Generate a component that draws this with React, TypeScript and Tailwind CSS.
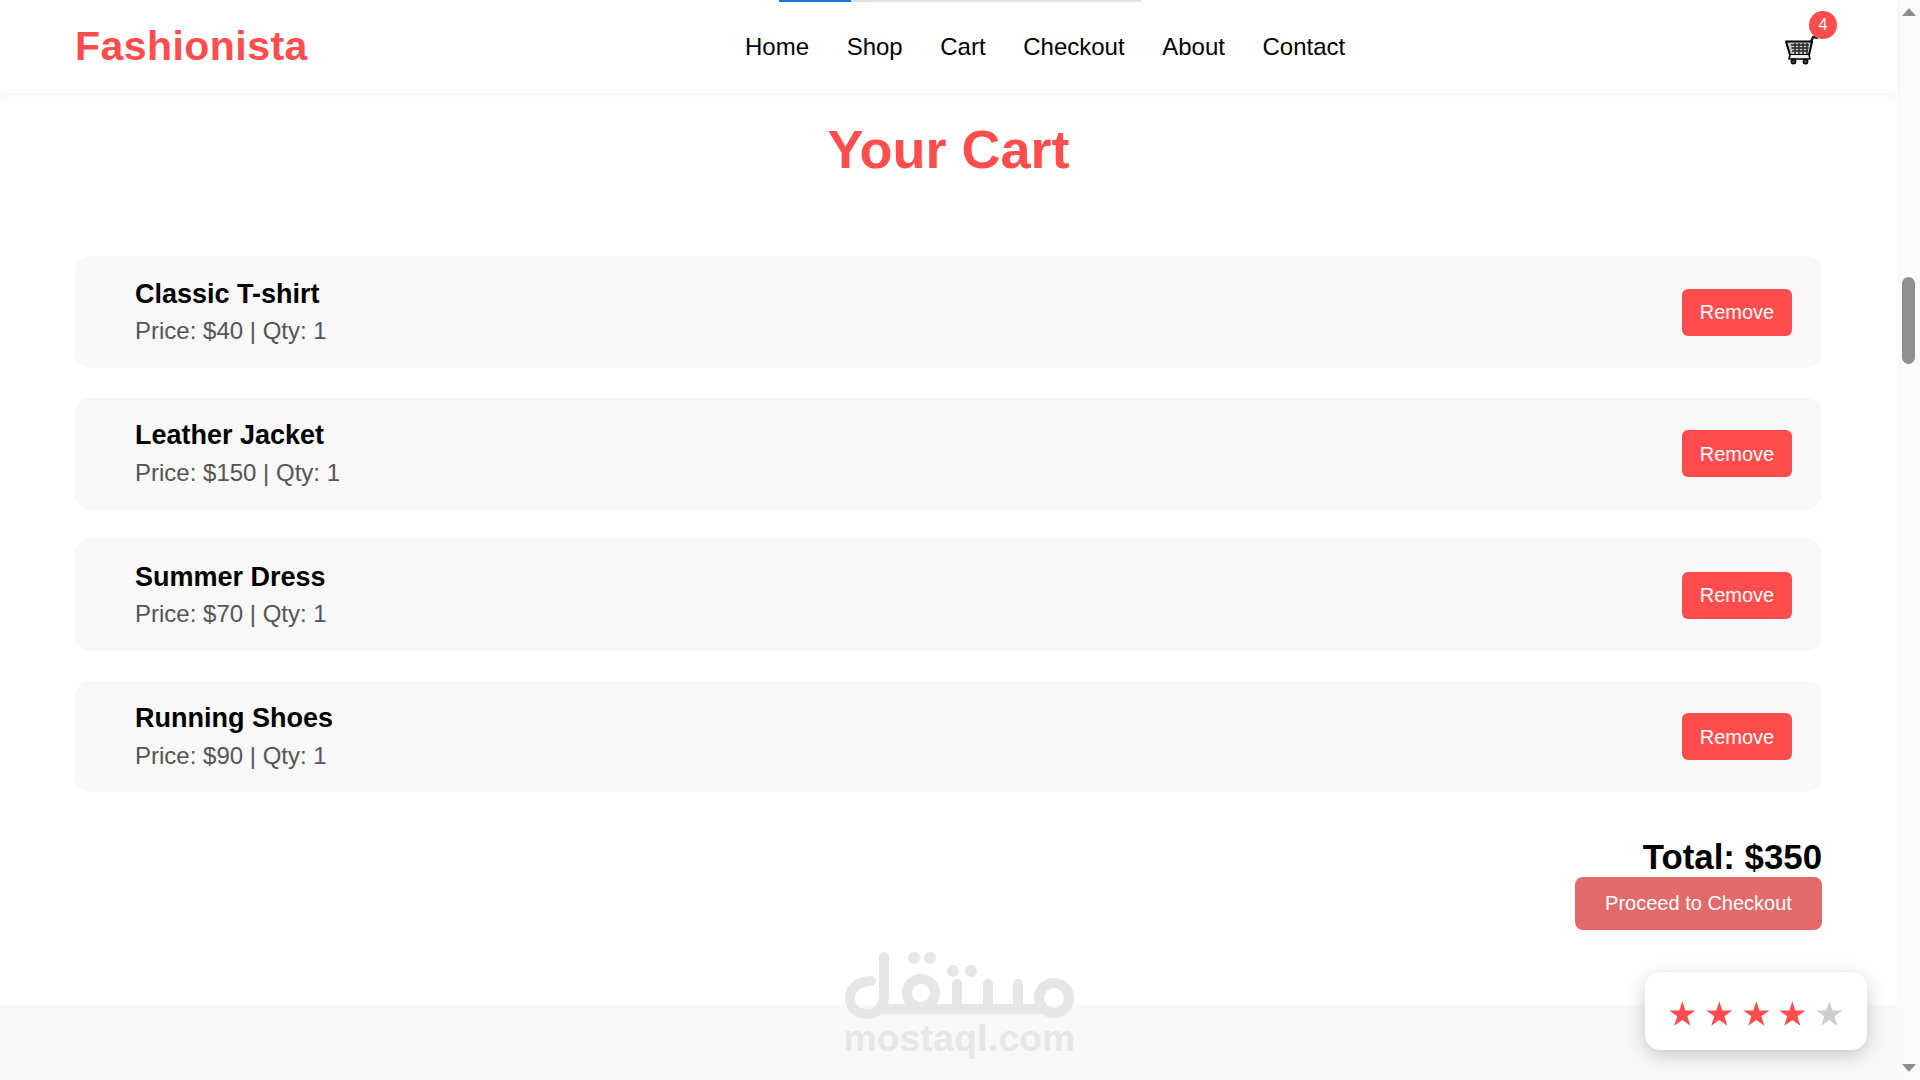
const items = [
  { name: "Classic T-shirt", price: 40 },
  { name: "Leather Jacket", price: 150 },
  { name: "Summer Dress", price: 70 },
  { name: "Running Shoes", price: 90 },
];
const navs = ["Home", "Shop", "Cart", "Checkout", "About", "Contact"];

function CartIcon() {
  return (
    <svg width="34" height="30" viewBox="0 0 34 30" fill="none" className="block">
      <path d="M26 7 L28 2 L33 3" stroke="#222" strokeWidth="2.4" strokeLinejoin="round" />
      <path d="M1 6.5 H27 L24 20 H5 Z" fill="#c4c4c4" stroke="#000" strokeWidth="2" strokeLinejoin="round" />
      <path d="M6 10 H24 M6.5 13 H23.5 M7 16 H23 M10 8 V19 M14 8 V19 M18 8 V19 M22 8 V19" stroke="#222" strokeWidth="1.3" />
      <path d="M5 20 L4 24 H25 L24 20" fill="#ececec" stroke="#000" strokeWidth="1.6" strokeLinejoin="round" />
      <circle cx="8.5" cy="26.5" r="2.2" fill="#444" stroke="#000" strokeWidth="1.4" />
      <circle cx="20.5" cy="26.5" r="2.2" fill="#444" stroke="#000" strokeWidth="1.4" />
    </svg>
  );
}

function Star({ color }: { color: string }) {
  return (
    <svg width="26.67" height="25" viewBox="0 0 27 25" className="block">
      <path d="M13.5 0 L16.6 9.4 H26.7 L18.6 15.3 L21.7 25 L13.5 19 L5.3 25 L8.4 15.3 L0.3 9.4 H10.4 Z" fill={color} />
    </svg>
  );
}

function Watermark() {
  return (
    <div className="pointer-events-none absolute left-[845px] top-[952px] flex w-[229px] flex-col items-center">
      <svg width="229" height="68" viewBox="0 0 229 68" fill="none" stroke="#e6e6e6" strokeWidth="10" strokeLinecap="round" className="block">
        <path d="M26 29 C12 29 5 37 5 46 C5 56 12 62 22 62 C33 62 39 54 39 44 V5" />
        <path d="M34 57 H196" />
        <circle cx="76" cy="41" r="14" />
        <path d="M112 32 V52 C112 55 114 57 118 57 M143 32 V52 C143 55 141 57 137 57 M143 52 C143 55 145 57 149 57 M173 32 V52 C173 55 171 57 167 57" />
        <circle cx="209" cy="46" r="15" />
        <circle cx="69" cy="6" r="6" fill="#e6e6e6" stroke="none" />
        <circle cx="85" cy="6" r="6" fill="#e6e6e6" stroke="none" />
        <circle cx="108" cy="19" r="6" fill="#e6e6e6" stroke="none" />
        <circle cx="126" cy="19" r="6" fill="#e6e6e6" stroke="none" />
      </svg>
      <div className="mt-[1px] whitespace-nowrap text-[37px] font-bold leading-[36px] tracking-[0.35px] text-[#e6e6e6]">mostaql.com</div>
    </div>
  );
}

export default function App() {
  return (
    <div className="relative h-[1080px] w-[1920px] overflow-hidden bg-white font-['Liberation_Sans',Arial,sans-serif] text-black">
      <div className="flex h-full">
        <div className="flex h-full w-[1897px] flex-col">
          <header className="relative z-10 flex h-[93px] shrink-0 items-center justify-between bg-white pl-[75px] pr-[75px] shadow-[0_2px_10px_rgba(0,0,0,0.06)]">
            <div className="absolute left-[779px] top-0 flex h-[2px] w-[362px] bg-[#e0e0e0]">
              <div className="h-full w-[72px] bg-[#1976d2]" />
            </div>
            <div className="text-[41px] font-bold leading-none tracking-[0.45px] text-[#ff4d4d]">Fashionista</div>
            <nav className="absolute left-[745px] flex gap-[37.6px] text-[24px] leading-none">
              {navs.map((n) => (
                <span key={n}>{n}</span>
              ))}
            </nav>
            <div className="relative ml-auto mr-[3px] mt-[7px]">
              <CartIcon />
              <span className="absolute left-[24px] top-[-24px] flex h-[28px] w-[28px] items-center justify-center rounded-full bg-[#ff4d4d] text-[16px] text-white">4</span>
            </div>
          </header>

          <main className="flex flex-1 flex-col px-[75px]">
            <h1 className="mt-[26px] text-center text-[54px] font-bold leading-[60px] text-[#ff4d4d]">Your Cart</h1>
            <div className="mt-[77px] flex flex-col gap-[30px]">
              {items.map((it) => (
                <div key={it.name} className="flex h-[111.5px] items-center justify-between rounded-[15px] bg-[#f8f8f8] pl-[60px] pr-[30px]">
                  <div className="pt-[1.5px]">
                    <div className="text-[27px] font-bold leading-[36px]">{it.name}</div>
                    <div className="mt-[1.5px] text-[24px] leading-[36px] text-[#555]">Price: ${it.price} | Qty: 1</div>
                  </div>
                  <button className="mt-[0.5px] h-[47px] w-[110px] rounded-[6px] bg-[#ff4d4d] text-[20px] text-white">Remove</button>
                </div>
              ))}
            </div>
            <div className="mt-[44.5px] flex flex-col items-end">
              <div className="text-[34.8px] font-bold leading-[40px]">Total: $350</div>
              <button className="mt-[0.5px] h-[53px] w-[247px] rounded-[8px] bg-[#e36a6a] pb-[2px] text-[20px] text-white">Proceed to Checkout</button>
            </div>
          </main>
          <footer className="h-[75px] shrink-0 bg-[#f8f8f8]" />
        </div>

        <aside className="relative h-full w-[23px] bg-[#fbfbfb]">
          <div className="absolute left-[5px] top-[8px] h-0 w-0 border-x-[7.5px] border-b-[8px] border-x-transparent border-b-[#8f8f8f]" />
          <div className="absolute left-[5px] top-[277px] h-[87px] w-[13px] rounded-full bg-[#8f8f8f]" />
          <div className="absolute bottom-[8px] left-[5px] h-0 w-0 border-x-[7.5px] border-t-[8px] border-x-transparent border-t-[#8f8f8f]" />
        </aside>
      </div>

      <Watermark />

      <div className="absolute left-[1645px] top-[972px] flex h-[78px] w-[222px] items-center justify-center gap-[10px] rounded-[15px] bg-white pt-[5px] shadow-[0_5px_20px_rgba(0,0,0,0.2)]">
        {[0, 1, 2, 3, 4].map((i) => (
          <Star key={i} color={i < 4 ? "#ff4d4d" : "#cccccc"} />
        ))}
      </div>
    </div>
  );
}
